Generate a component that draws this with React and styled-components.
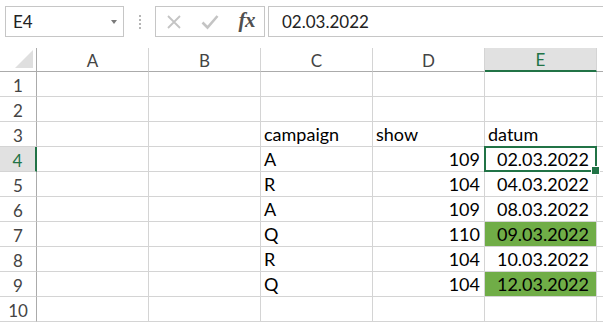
import React from "react";
import styled, { createGlobalStyle, css } from "styled-components";

const GlobalStyle = createGlobalStyle`
  html, body { margin: 0; padding: 0; background: #ffffff; }
  body { font-family: Lato, "Open Sans", sans-serif; overflow: hidden; }
  * { box-sizing: border-box; }
`;

const Page = styled.div`
  width: 603px;
  height: 323px;
  overflow: hidden;
  background: #fff;
`;

const FormulaBar = styled.div`
  display: flex;
  align-items: flex-start;
  height: 48px;
  padding: 6px 0 0 5px;
`;

const Box = styled.div`
  height: 31px;
  border: 1px solid #c6c6c6;
  display: flex;
  align-items: center;
  background: #fff;
`;

const NameBox = styled(Box)`
  width: 119px;
  padding-left: 7px;
  font-size: 17px;
  color: #222;
  justify-content: space-between;
  padding-right: 6px;
`;

const Caret = styled.span`
  width: 0;
  height: 0;
  border-left: 3.5px solid transparent;
  border-right: 3.5px solid transparent;
  border-top: 4px solid #7a7a7a;
  margin-top: 1px;
`;

const Dots = styled.div`
  width: 31px;
  height: 31px;
  display: flex;
  flex-direction: column;
  align-items: center;
  justify-content: center;
  gap: 2px;
  & > span {
    width: 2px;
    height: 2px;
    background: #b5b5b5;
  }
`;

const FxBox = styled(Box)`
  width: 110px;
  padding: 0 9px 0 10px;
  justify-content: space-between;
`;

const Fx = styled.span`
  font-family: "Liberation Serif", "DejaVu Serif", serif;
  font-style: italic;
  font-weight: bold;
  font-size: 21px;
  color: #505050;
  letter-spacing: -0.5px;
  margin-top: -3px;
`;

const FormulaInput = styled(Box)`
  flex: 1;
  margin-left: 3px;
  border-right: none;
  padding-left: 13px;
  font-size: 17px;
  color: #222;
`;

const Grid = styled.div`
  display: grid;
  grid-template-columns: 37px repeat(5, 112px) 1fr;
  grid-template-rows: 24px;
  grid-auto-rows: 25px;
`;

const HeaderCell = styled.div`
  display: flex;
  align-items: center;
  justify-content: center;
  font-size: 17px;
  color: #444;
  border-right: 1px solid #d4d4d4;
  border-bottom: 1px solid #ababab;
  padding-top: 1px;
  ${(p) =>
    p.$active &&
    css`
      background: #e1e1e1;
      color: #217346;
      border-bottom: 2px solid #217346;
    `}
`;

const Corner = styled.div`
  border-right: 1px solid #ababab;
  border-bottom: 1px solid #ababab;
  display: flex;
  align-items: flex-end;
  justify-content: flex-end;
  padding: 0 3px 3px 0;
`;

const RowHead = styled.div`
  display: flex;
  align-items: center;
  justify-content: center;
  font-size: 17px;
  color: #444;
  border-right: 1px solid #ababab;
  border-bottom: 1px solid #d4d4d4;
  padding-top: 2px;
  ${(p) =>
    p.$active &&
    css`
      background: #e1e1e1;
      color: #217346;
      border-right: 2px solid #217346;
    `}
`;

const Cell = styled.div`
  position: relative;
  display: flex;
  align-items: flex-end;
  justify-content: ${(p) => (p.$align === "right" ? "flex-end" : "flex-start")};
  padding: 0 ${(p) => (p.$pad != null ? p.$pad : 4)}px 2px 3px;
  font-size: 18px;
  line-height: 20px;
  color: #000;
  white-space: nowrap;
  border-right: 1px solid #d4d4d4;
  border-bottom: 1px solid #d4d4d4;
  background: ${(p) => (p.$fill ? "#70ad47" : "transparent")};
  ${(p) =>
    p.$selected &&
    css`
      &::after {
        content: "";
        position: absolute;
        top: -1px;
        left: -1px;
        right: -1px;
        bottom: -1px;
        border: 2px solid #217346;
        pointer-events: none;
      }
      &::before {
        content: "";
        position: absolute;
        right: -4px;
        bottom: -4px;
        width: 7px;
        height: 7px;
        background: #217346;
        border: 1px solid #fff;
        z-index: 2;
      }
    `}
`;

const columns = ["A", "B", "C", "D", "E"];

const data = {
  3: { C: { v: "campaign" }, D: { v: "show" }, E: { v: "datum" } },
  4: { C: { v: "A" }, D: { v: "109", r: true }, E: { v: "02.03.2022", d: true } },
  5: { C: { v: "R" }, D: { v: "104", r: true }, E: { v: "04.03.2022", d: true } },
  6: { C: { v: "A" }, D: { v: "109", r: true }, E: { v: "08.03.2022", d: true } },
  7: { C: { v: "Q" }, D: { v: "110", r: true }, E: { v: "09.03.2022", d: true, fill: true } },
  8: { C: { v: "R" }, D: { v: "104", r: true }, E: { v: "10.03.2022", d: true } },
  9: { C: { v: "Q" }, D: { v: "104", r: true }, E: { v: "12.03.2022", d: true, fill: true } },
};

const CrossIcon = () => (
  <svg width="16" height="16" viewBox="0 0 16 16">
    <path d="M2 2 L14 14 M14 2 L2 14" stroke="#c4c4c4" strokeWidth="1.8" fill="none" />
  </svg>
);

const CheckIcon = () => (
  <svg width="18" height="16" viewBox="0 0 18 16">
    <path d="M1.5 8.5 L6.5 13.5 L16.5 2" stroke="#c4c4c4" strokeWidth="2.6" fill="none" />
  </svg>
);

const CornerTriangle = () => (
  <svg width="18" height="18" viewBox="0 0 18 18">
    <path d="M18 0 L18 18 L0 18 Z" fill="#dfdfdf" />
  </svg>
);

export default function App() {
  const rows = Array.from({ length: 10 }, (_, i) => i + 1);
  return (
    <Page>
      <GlobalStyle />
      <FormulaBar>
        <NameBox>
          <span>E4</span>
          <Caret />
        </NameBox>
        <Dots>
          <span />
          <span />
          <span />
          <span />
        </Dots>
        <FxBox>
          <CrossIcon />
          <CheckIcon />
          <Fx>fx</Fx>
        </FxBox>
        <FormulaInput>02.03.2022</FormulaInput>
      </FormulaBar>
      <Grid>
        <Corner>
          <CornerTriangle />
        </Corner>
        {columns.map((c) => (
          <HeaderCell key={c} $active={c === "E"}>
            {c}
          </HeaderCell>
        ))}
        <HeaderCell />
        {rows.map((r) => (
          <React.Fragment key={r}>
            <RowHead $active={r === 4}>{r}</RowHead>
            {columns.map((c) => {
              const item = data[r] && data[r][c];
              return (
                <Cell
                  key={c}
                  $align={item && (item.r || item.d) ? "right" : "left"}
                  $pad={item && item.d ? 7 : 4}
                  $fill={item && item.fill}
                  $selected={r === 4 && c === "E"}
                >
                  {item ? item.v : ""}
                </Cell>
              );
            })}
            <Cell />
          </React.Fragment>
        ))}
      </Grid>
    </Page>
  );
}
